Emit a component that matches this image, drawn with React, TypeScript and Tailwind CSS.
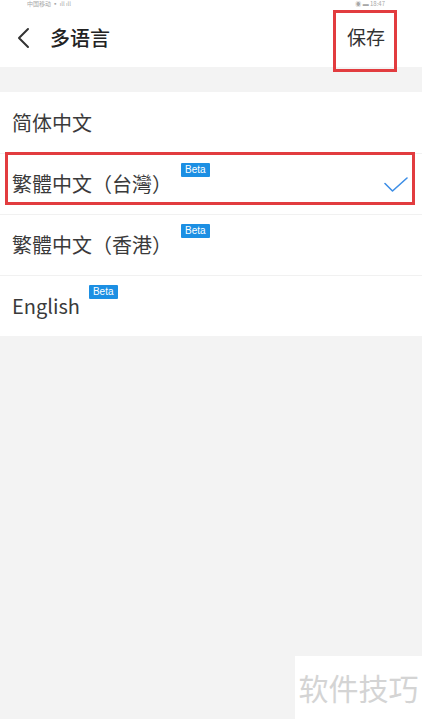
import React from "react";

const font = {
  fontFamily: '"Noto Sans CJK SC", "Noto Sans", sans-serif',
};

function Beta({ className = "" }: { className?: string }) {
  return (
    <span
      className={`inline-flex h-[14px] items-center rounded-[1px] bg-[#1c8fe3] px-[4px] text-[10px] leading-none text-white ${className}`}
      style={{ fontFamily: '"Liberation Sans", Arial, sans-serif' }}
    >
      Beta
    </span>
  );
}

function Check() {
  return (
    <svg width="24" height="16" viewBox="0 0 24 16" fill="none">
      <path d="M1 6.5 L8.5 14 L23 1" stroke="#3d8ee6" strokeWidth="1.6" strokeLinecap="round" strokeLinejoin="round" />
    </svg>
  );
}

const languages = [
  { name: "简体中文", beta: false, selected: false },
  { name: "繁體中文（台灣）", beta: true, selected: true },
  { name: "繁體中文（香港）", beta: true, selected: false },
  { name: "English", beta: true, selected: false },
];

export default function App() {
  return (
    <div className="relative flex h-[719px] w-[422px] flex-col overflow-hidden bg-[#f3f3f3]" style={font}>
      {/* status bar, mostly cropped */}
      <div className="flex h-[8px] items-center justify-between bg-white px-[27px] text-[6px] leading-[8px] text-[#a8a8a8]">
        <span>中国移动 ▪ ıll ıll</span>
        <span className="mr-[10px]">◉ ▬ 18:47</span>
      </div>

      {/* header */}
      <div className="relative flex h-[59px] items-center bg-white">
        <svg className="ml-[16px]" width="14" height="22" viewBox="0 0 14 22" fill="none">
          <path d="M12 2 L3 11 L12 20" stroke="#333" strokeWidth="2" strokeLinecap="round" strokeLinejoin="round" />
        </svg>
        <span className="ml-[20px] text-[20px] font-medium text-[#222]">多语言</span>
        <span className="ml-auto mr-[37px] text-[19px] text-[#333]">保存</span>
        <div className="absolute left-[333px] top-[2px] h-[62px] w-[64px] border-[3px] border-[#e23c3f]" />
      </div>

      <div className="h-[25px]" />

      {/* language list */}
      <div className="bg-white">
        {languages.map((lang, i) => (
          <div
            key={lang.name}
            className={`relative flex h-[61px] items-center pl-[12px] pr-[14px] ${
              i > 0 ? "border-t border-[#f1f1f1]" : ""
            }`}
          >
            <span className="text-[20px] text-[#3a3a3a]">{lang.name}</span>
            {lang.beta && <Beta className="mb-[28px] ml-[9px] self-center" />}
            {lang.selected && (
              <span className="ml-auto mt-[2px]">
                <Check />
              </span>
            )}
            {lang.selected && (
              <div className="absolute left-[5px] top-[-2px] h-[53px] w-[410px] border-[3px] border-[#e23c3f]" />
            )}
          </div>
        ))}
      </div>

      {/* watermark */}
      <div className="absolute bottom-0 right-0 flex h-[63px] w-[127px] items-center justify-center bg-white">
        <span className="text-[30px] text-[#d4d4d4]">软件技巧</span>
      </div>
    </div>
  );
}
